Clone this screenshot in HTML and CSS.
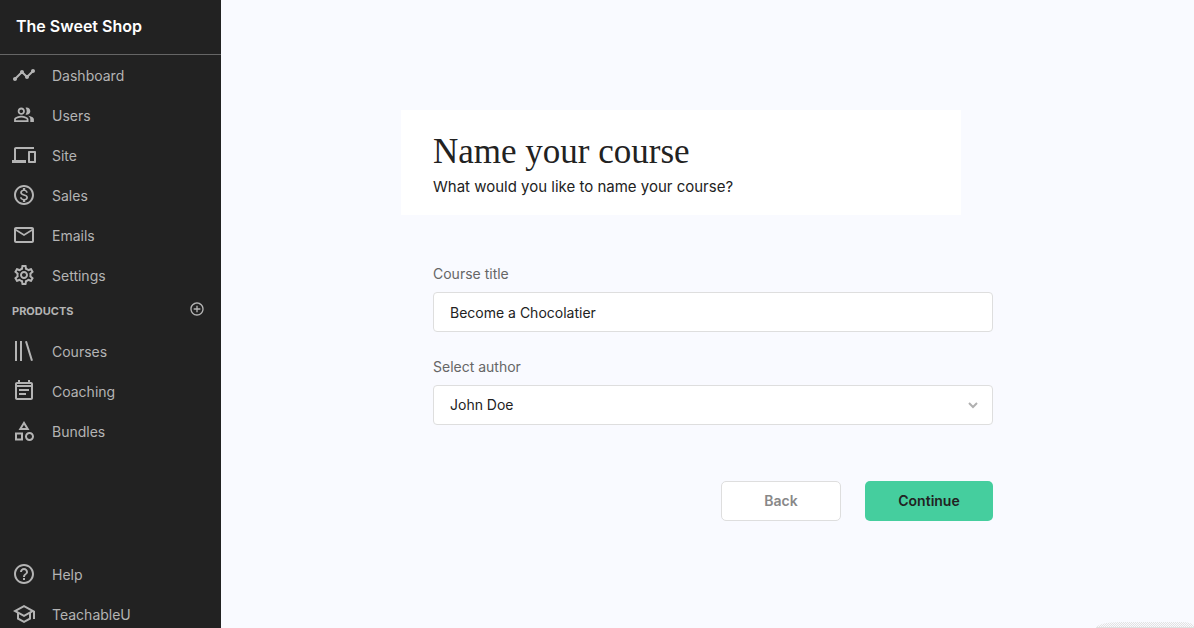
FILE: index.html
```html
<!DOCTYPE html>
<html lang="en">
<head>
<meta charset="utf-8">
<meta name="viewport" content="width=device-width, initial-scale=1">
<title>Name your course – The Sweet Shop</title>
<link rel="stylesheet" href="styles.css">
</head>
<body class="app">
<aside class="sidebar">
  <header class="sidebar-header"><a class="school-name" href="#">The Sweet Shop</a></header>
  <nav class="nav" aria-label="Admin">
    <a class="nav-link" href="#"><svg class="icon" viewBox="0 0 24 24"><path d="M23 8c0 1.1-.9 2-2 2-.18 0-.35-.02-.51-.07l-3.56 3.55c.05.16.07.34.07.52 0 1.1-.9 2-2 2s-2-.9-2-2c0-.18.02-.36.07-.52l-2.55-2.55c-.16.05-.34.07-.52.07s-.36-.02-.52-.07l-4.55 4.56c.05.16.07.33.07.51 0 1.1-.9 2-2 2s-2-.9-2-2 .9-2 2-2c.18 0 .35.02.51.07l4.56-4.55C8.02 9.36 8 9.18 8 9c0-1.1.9-2 2-2s2 .9 2 2c0 .18-.02.36-.07.52l2.55 2.55c.16-.05.34-.07.52-.07s.36.02.52.07l3.55-3.56C19.02 8.35 19 8.18 19 8c0-1.1.9-2 2-2s2 .9 2 2z"/></svg><span class="nav-text">Dashboard</span></a>
    <a class="nav-link" href="#"><svg class="icon" viewBox="0 0 24 24"><path d="M16.67 13.13C18.04 14.06 19 15.32 19 17v3h4v-3c0-2.18-3.57-3.47-6.33-3.87zM15 12c2.21 0 4-1.79 4-4s-1.79-4-4-4c-.47 0-.91.1-1.33.24C14.5 5.27 15 6.58 15 8s-.5 2.73-1.33 3.76c.42.14.86.24 1.33.24zM9 12c2.21 0 4-1.79 4-4s-1.79-4-4-4-4 1.79-4 4 1.79 4 4 4zm0-6c1.1 0 2 .9 2 2s-.9 2-2 2-2-.9-2-2 .9-2 2-2zM9 13c-2.67 0-8 1.34-8 4v3h16v-3c0-2.66-5.33-4-8-4zm6 5H3v-.99C3.2 16.29 6.3 15 9 15s5.8 1.29 6 2v1z" transform="translate(1.200 1) scale(.9)"/></svg><span class="nav-text">Users</span></a>
    <a class="nav-link" href="#"><svg class="icon" viewBox="0 0 24 24"><path d="M4 6h18V4H4c-1.1 0-2 .9-2 2v11H0v3h14v-3H4V6zm19 2h-6c-.55 0-1 .45-1 1v10c0 .55.45 1 1 1h6c.55 0 1-.45 1-1V9c0-.55-.45-1-1-1zm-1 10h-4v-8h4v8z"/></svg><span class="nav-text">Site</span></a>
    <a class="nav-link" href="#"><svg class="icon" viewBox="0 0 24 24"><path d="M12 2C6.48 2 2 6.48 2 12s4.48 10 10 10 10-4.48 10-10S17.52 2 12 2zm0 18c-4.41 0-8-3.59-8-8s3.59-8 8-8 8 3.59 8 8-3.59 8-8 8zm.31-8.86c-1.77-.45-2.34-.94-2.34-1.67 0-.84.79-1.43 2.1-1.43 1.38 0 1.9.66 1.94 1.64h1.71c-.05-1.34-.87-2.57-2.49-2.97V5H10.9v1.69c-1.51.32-2.72 1.3-2.72 2.81 0 1.79 1.49 2.69 3.66 3.21 1.95.46 2.34 1.15 2.34 1.87 0 .53-.39 1.39-2.1 1.39-1.6 0-2.23-.72-2.32-1.64H8.04c.1 1.7 1.36 2.66 2.86 2.97V19h2.34v-1.67c1.52-.29 2.72-1.16 2.73-2.77-.01-2.2-1.9-2.96-3.66-3.42z"/></svg><span class="nav-text">Sales</span></a>
    <a class="nav-link" href="#"><svg class="icon" viewBox="0 0 24 24"><path d="M22 6c0-1.1-.9-2-2-2H4c-1.1 0-2 .9-2 2v12c0 1.1.9 2 2 2h16c1.1 0 2-.9 2-2V6zm-2 0l-8 5-8-5h16zm0 12H4V8l8 5 8-5v10z"/></svg><span class="nav-text">Emails</span></a>
    <a class="nav-link" href="#"><svg class="icon" viewBox="0 0 24 24"><path d="M19.43 12.98c.04-.32.07-.64.07-.98s-.03-.66-.07-.98l2.11-1.65c.19-.15.24-.42.12-.64l-2-3.46c-.09-.16-.26-.25-.44-.25-.06 0-.12.01-.17.03l-2.49 1c-.52-.4-1.08-.73-1.69-.98l-.38-2.65C14.46 2.18 14.25 2 14 2h-4c-.25 0-.46.18-.49.42l-.38 2.65c-.61.25-1.17.59-1.69.98l-2.49-1c-.06-.02-.12-.03-.18-.03-.17 0-.34.09-.43.25l-2 3.46c-.13.22-.07.49.12.64l2.11 1.65c-.04.32-.07.65-.07.98s.03.66.07.98l-2.11 1.65c-.19.15-.24.42-.12.64l2 3.46c.09.16.26.25.44.25.06 0 .12-.01.17-.03l2.49-1c.52.4 1.08.73 1.69.98l.38 2.65c.03.24.24.42.49.42h4c.25 0 .46-.18.49-.42l.38-2.65c.61-.25 1.17-.59 1.69-.98l2.49 1c.06.02.12.03.18.03.17 0 .34-.09.43-.25l2-3.46c.12-.22.07-.49-.12-.64l-2.11-1.65zm-1.98-1.71c.04.31.05.52.05.73s-.02.43-.05.73l-.14 1.13.89.7 1.08.84-.7 1.21-1.27-.51-1.04-.42-.9.68c-.43.32-.84.56-1.25.73l-1.06.43-.16 1.13-.2 1.35h-1.4l-.19-1.35-.16-1.13-1.06-.43c-.43-.18-.83-.41-1.23-.71l-.91-.7-1.06.43-1.27.51-.7-1.21 1.08-.84.89-.7-.14-1.13c-.03-.31-.05-.54-.05-.74s.02-.43.05-.73l.14-1.13-.89-.7-1.08-.84.7-1.21 1.27.51 1.04.42.9-.68c.43-.32.84-.56 1.25-.73l1.06-.43.16-1.13.2-1.35h1.39l.19 1.35.16 1.13 1.06.43c.43.18.83.41 1.23.71l.91.7 1.06-.43 1.27-.51.7 1.21-1.07.85-.89.7.14 1.13zM12 8c-2.21 0-4 1.79-4 4s1.79 4 4 4 4-1.79 4-4-1.79-4-4-4zm0 6c-1.1 0-2-.9-2-2s.9-2 2-2 2 .9 2 2-.9 2-2 2z"/></svg><span class="nav-text">Settings</span></a>
  </nav>
  <div class="section-head">
    <h2 class="section-title">PRODUCTS</h2>
    <button class="add-button" type="button" aria-label="Add product"><svg class="icon-small" viewBox="0 0 24 24"><path d="M13 7h-2v4H7v2h4v4h2v-4h4v-2h-4V7zm-1-5C6.480 2 2 6.480 2 12s4.480 10 10 10 10-4.480 10-10S17.520 2 12 2zm0 18c-4.410 0-8-3.590-8-8s3.590-8 8-8 8 3.590 8 8-3.590 8-8 8z"/></svg></button>
  </div>
  <nav class="nav" aria-label="Products">
    <a class="nav-link" href="#"><svg class="icon" viewBox="0 0 24 24"><path d="M3 2h2v20H3zM8 2h2v20H8zM13 2.500l1.950-.500 6 19.500-1.950.500z"/></svg><span class="nav-text">Courses</span></a>
    <a class="nav-link" href="#"><svg class="icon" viewBox="0 0 24 24"><path d="M17 10H7v2h10v-2zm2-7h-1V1h-2v2H8V1H6v2H5c-1.110 0-2 .9-2 2v14c0 1.100.890 2 2 2h14c1.100 0 2-.9 2-2V5c0-1.100-.9-2-2-2zm0 16H5V8h14v11zm0-13H5V5h14v1zm-5 8H7v2h7v-2z"/></svg><span class="nav-text">Coaching</span></a>
    <a class="nav-link" href="#"><svg class="icon" viewBox="0 0 24 24"><path d="M12 2l-5.500 9h11L12 2zm0 3.840L13.930 9h-3.870L12 5.840zM17.500 13c-2.490 0-4.500 2.010-4.500 4.500s2.010 4.500 4.500 4.500 4.500-2.010 4.500-4.500-2.010-4.500-4.500-4.500zm0 7c-1.380 0-2.500-1.120-2.500-2.500s1.120-2.500 2.500-2.500 2.500 1.120 2.500 2.500-1.120 2.500-2.500 2.500zM3 21.500h8v-8H3v8zm2-6h4v4H5v-4z"/></svg><span class="nav-text">Bundles</span></a>
  </nav>
  <nav class="nav nav-support" aria-label="Support">
    <a class="nav-link" href="#"><svg class="icon" viewBox="0 0 24 24"><path d="M11 18h2v-2h-2v2zm1-16C6.480 2 2 6.480 2 12s4.480 10 10 10 10-4.480 10-10S17.520 2 12 2zm0 18c-4.410 0-8-3.590-8-8s3.590-8 8-8 8 3.590 8 8-3.590 8-8 8zm0-14c-2.210 0-4 1.790-4 4h2c0-1.100.9-2 2-2s2 .9 2 2c0 2-3 1.750-3 5h2c0-2.250 3-2.500 3-5 0-2.210-1.790-4-4-4z"/></svg><span class="nav-text">Help</span></a>
    <a class="nav-link" href="#"><svg class="icon" viewBox="0 0 24 24"><path d="M12 3L1 9l4 2.180v6L12 21l7-3.820v-6l2-1.090V17h2V9L12 3zm6.820 6L12 12.720 5.180 9 12 5.280 18.820 9zM17 15.990l-5 2.730-5-2.730v-3.720L12 15l5-2.730v3.720z"/></svg><span class="nav-text">TeachableU</span></a>
  </nav>
</aside>
<main class="main">
  <div class="wizard">
    <header class="intro">
      <h1 class="intro-title">Name your course</h1>
      <p class="intro-text">What would you like to name your course?</p>
    </header>
    <form class="form">
      <div class="field">
        <label class="label" for="title">Course title</label>
        <input class="control" id="title" type="text" value="Become a Chocolatier">
      </div>
      <div class="field">
        <label class="label" for="author">Select author</label>
        <select class="control control-select" id="author"><option>John Doe</option></select>
      </div>
      <div class="actions">
        <button class="button button-back" type="button">Back</button>
        <button class="button button-continue" type="submit">Continue</button>
      </div>
    </form>
  </div>
</main>
<div class="corner-shade" aria-hidden="true"></div>
</body>
</html>
```
FILE: styles.css
```css
* { box-sizing: border-box; }

.app {
  margin: 0;
  min-height: 100vh;
  display: grid;
  grid-template-columns: 221px 1fr;
  background: #f9faff;
  color: #222;
  font-family: Inter, "Liberation Sans", sans-serif;
  font-size: 14px;
  line-height: 20px;
}

.sidebar {
  height: 100vh;
  display: flex;
  flex-direction: column;
  background: #222;
  color: #b4b4b4;
  overflow: hidden;
}

.sidebar-header {
  padding: 14px 16px 16px;
  border-bottom: 1px solid #666;
  margin-bottom: 6px;
}

.school-name {
  display: block;
  color: #fff;
  font-size: 16px;
  font-weight: 600;
  line-height: 24px;
  text-decoration: none;
}

.nav {
  display: flex;
  flex-direction: column;
  gap: 12px;
}

.nav-link {
  display: flex;
  align-items: center;
  gap: 16px;
  height: 28px;
  padding: 0 12px;
  color: inherit;
  text-decoration: none;
}

.nav-text { padding-top: 2px; }

.icon {
  width: 24px;
  height: 24px;
  fill: currentColor;
}

.nav-support { margin-top: auto; }

.section-head {
  display: flex;
  align-items: center;
  justify-content: space-between;
  padding: 12px 16px 18px 12px;
}

.section-title {
  margin: 0;
  padding-top: 2px;
  font-size: 11px;
  font-weight: 700;
  line-height: 16px;
}

.add-button {
  display: flex;
  align-self: flex-start;
  padding: 0;
  border: 0;
  background: none;
  color: inherit;
}

.icon-small {
  width: 16px;
  height: 16px;
  fill: currentColor;
}

.main { padding: 110px 0 24px 11px; }

.wizard {
  max-width: 624px;
  margin: 0 auto;
}

.intro {
  margin-right: 64px;
  padding: 24px 32px 16px;
  background: #fff;
}

.intro-title {
  margin: 0;
  font-family: "Liberation Serif", serif;
  font-size: 35px;
  font-weight: 400;
  line-height: 35px;
}

.intro-text {
  margin: 6px 0 0;
  font-size: 15px;
  line-height: 24px;
}

.form { padding: 49px 32px 0; }

.field { margin-bottom: 25px; }

.label {
  display: block;
  margin-bottom: 8px;
  color: #666;
}

.control {
  display: block;
  width: 100%;
  height: 40px;
  padding: 0 16px;
  border: 1px solid #dedede;
  border-radius: 4px;
  background: #fff;
  color: #222;
  font: inherit;
}

.control-select {
  appearance: none;
  background: #fff url("data:image/svg+xml,%3Csvg xmlns='http://www.w3.org/2000/svg' width='10' height='7'%3E%3Cpath d='M1 1l4 4 4-4' fill='none' stroke='%23b0b0b0' stroke-width='2'/%3E%3C/svg%3E") no-repeat right 14px center;
}

.actions {
  display: flex;
  justify-content: flex-end;
  gap: 24px;
  padding-top: 31px;
}

.button {
  height: 40px;
  border: 1px solid transparent;
  border-radius: 5px;
  font: inherit;
  font-weight: 600;
}

.button-back {
  width: 120px;
  border-color: #dedede;
  background: #fff;
  color: #888;
}

.button-continue {
  width: 128px;
  background: #45ce9e;
  color: #222;
}

/* Dotted top edge of the floating widget shadow */
.corner-shade {
  position: fixed;
  right: 0;
  bottom: 0;
  width: 98px;
  height: 6px;
  border-radius: 24px 12px 0 0 / 6px 4px 0 0;
  border-bottom: 1px solid #e0e0e0;
  background: repeating-conic-gradient(#e2e2e2 0 25%, transparent 0 50%) 0 0 / 2px 2px;
  pointer-events: none;
}
```
